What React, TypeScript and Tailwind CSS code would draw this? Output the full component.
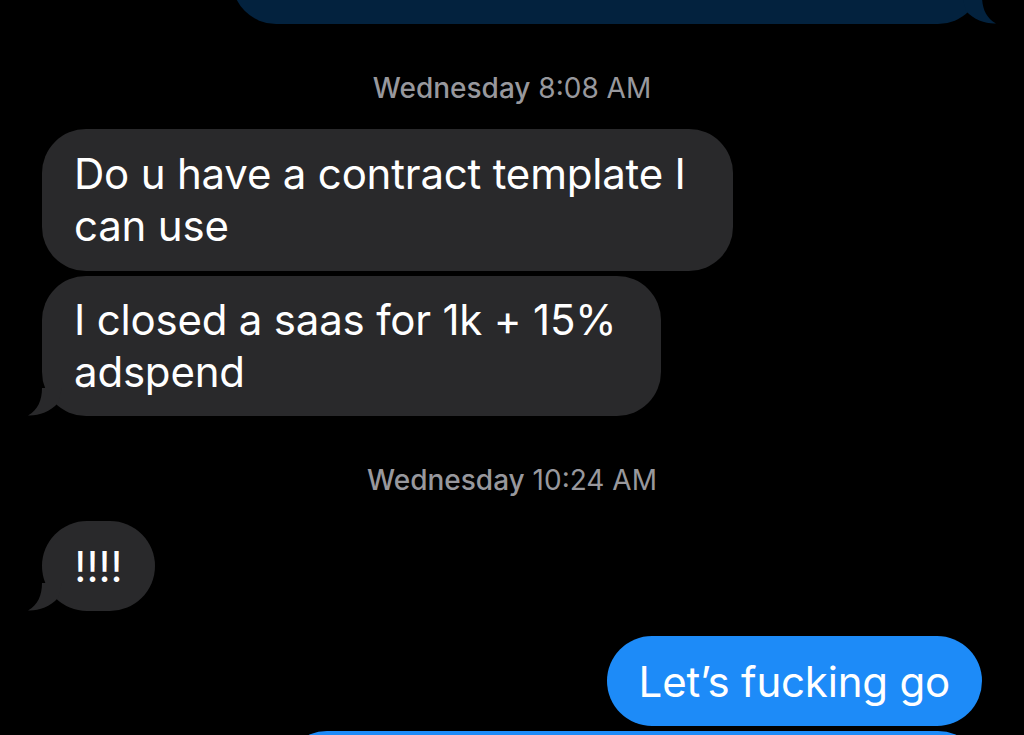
import React from "react"

const font = { fontFamily: "Inter, 'Noto Sans', sans-serif" }

function TailLeft({ color }: { color: string }) {
  return (
    <svg
      className="absolute bottom-0 left-[-14px]"
      width="34"
      height="28"
      viewBox="0 0 34 28"
    >
      <path
        d="M14 0 C14 12 10 22 0 27.5 C10 28 22 24 30 15 L34 0 Z"
        fill={color}
      />
    </svg>
  )
}

function TailRight({ color }: { color: string }) {
  return (
    <svg
      className="absolute bottom-0 right-[-14px]"
      width="34"
      height="28"
      viewBox="0 0 34 28"
    >
      <path
        d="M20 0 C20 12 24 22 34 27.5 C24 28 12 24 4 15 L0 0 Z"
        fill={color}
      />
    </svg>
  )
}

function Stamp({ day, time }: { day: string; time: string }) {
  return (
    <div className="shrink-0 text-center text-[28px] leading-[32px] text-[#98989d]">
      <span className="font-medium">{day}</span> <span>{time}</span>
    </div>
  )
}

export default function App() {
  return (
    <div
      className="w-[1024px] h-[735px] overflow-hidden bg-black flex flex-col antialiased"
      style={font}
    >
      {/* previous outgoing message, cut off at top */}
      <div className="relative shrink-0 self-end mr-[42px] mt-[-76px] w-[750px] h-[100px] rounded-[44px] bg-[#03223e]">
        <TailRight color="#03223e" />
      </div>

      <div className="mt-[48px] shrink-0">
        <Stamp day="Wednesday" time="8:08 AM" />
      </div>

      <div className="shrink-0 mt-[25px] ml-[42px] w-[691px] rounded-[44px] bg-[#29292b] px-[32px] py-[19px] text-[42px] leading-[52px] tracking-[-0.2px] text-white">
        Do u have a contract template I<br />can use
      </div>

      <div className="relative shrink-0 mt-[5px] ml-[42px] w-[619px] rounded-[44px] bg-[#29292b] px-[32px] py-[18px] text-[42px] leading-[52px] tracking-[-0.2px] text-white">
        I closed a saas for 1k + 15%<br />adspend
        <TailLeft color="#29292b" />
      </div>

      <div className="mt-[48px] shrink-0">
        <Stamp day="Wednesday" time="10:24 AM" />
      </div>

      <div className="relative shrink-0 mt-[25px] ml-[42px] w-[113px] h-[90px] rounded-[45px] bg-[#29292b] flex items-center justify-center text-[42px] text-white">
        !!!!
        <TailLeft color="#29292b" />
      </div>

      <div className="shrink-0 self-end mt-[25px] mr-[42px] h-[90px] rounded-[45px] bg-[#1d8bf8] px-[32px] flex items-center text-[42px] tracking-[-0.2px] text-white">
        Let’s fucking go
      </div>

      <div className="self-end shrink-0 mt-[5px] mr-[42px] w-[699px] h-[100px] rounded-[44px] bg-[#1d8bf8]" />
    </div>
  )
}
